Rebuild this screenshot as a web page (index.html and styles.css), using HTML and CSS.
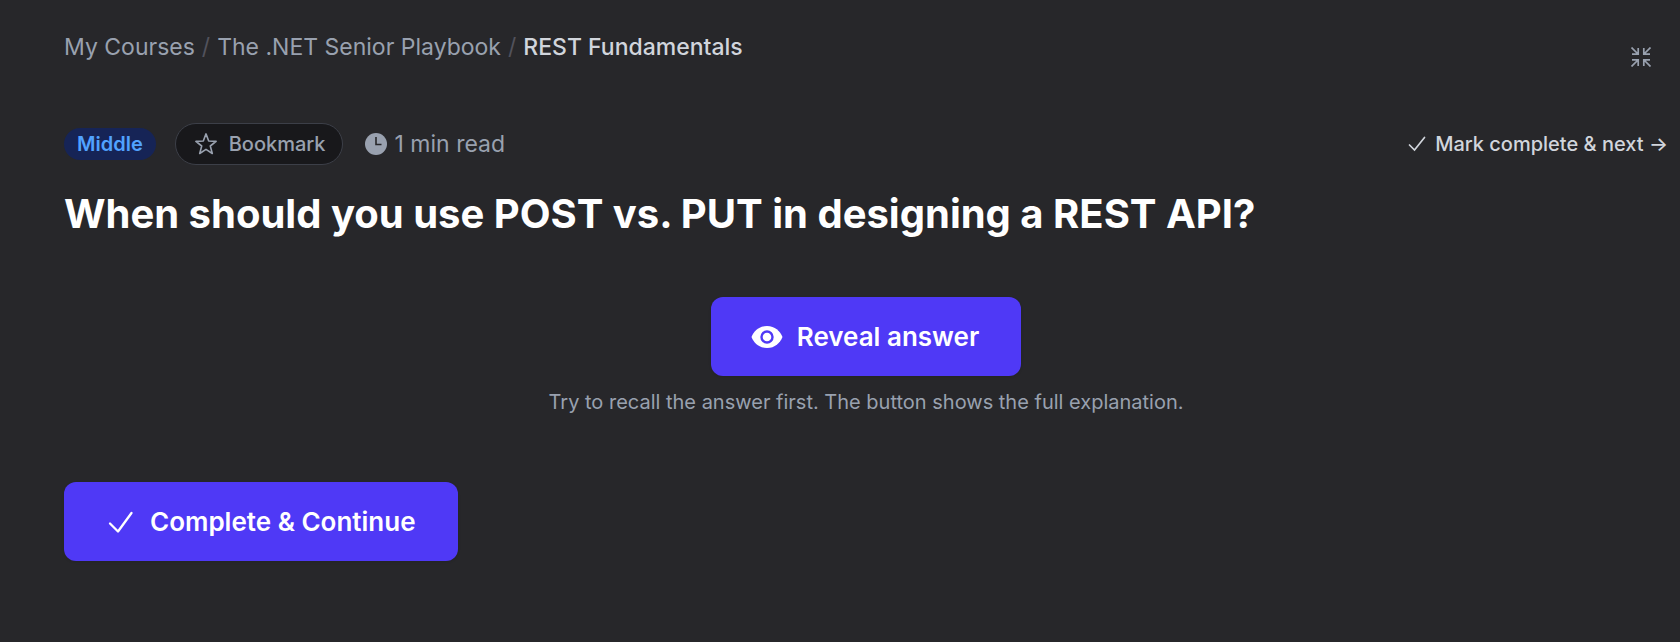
FILE: index.html
```html
<!DOCTYPE html>
<html lang="en">
<head>
<meta charset="utf-8">
<title>REST Fundamentals</title>
<link rel="stylesheet" href="styles.css">
</head>
<body>
<div class="page">
  <header class="topbar">
    <nav class="breadcrumb" aria-label="Breadcrumb">
      <a href="#">My Courses</a>
      <span class="separator">/</span>
      <a href="#">The .NET Senior Playbook</a>
      <span class="separator">/</span>
      <span class="current" aria-current="page">REST Fundamentals</span>
    </nav>
    <button class="collapse" type="button" aria-label="Exit focus mode">
      <svg width="20" height="20" viewBox="0 0 20 20" fill="none" stroke="currentColor" stroke-width="1.700"><path d="M.5.5 7 7M1 7.200H7.200V1M19.500.5 13 7M12.800 1v6.200H19M.5 19.500 7 13M1 12.800H7.200V19M19.500 19.500 13 13M12.800 19v-6.200H19"/></svg>
    </button>
  </header>
  <main>
    <div class="meta">
      <span class="level">Middle</span>
      <button class="bookmark" type="button">
        <svg width="22" height="22" viewBox="0 0 22 22" fill="none" stroke="currentColor" stroke-width="1.600" stroke-linejoin="round"><path d="M11 .9 13.700 8 21.100 8.400 15.300 13 17.300 20.500 11 16.400 4.700 20.500 6.700 13 .9 8.400 8.300 8Z"/></svg>
        Bookmark
      </button>
      <span class="duration">
        <svg width="22" height="22" viewBox="0 0 22 22"><circle cx="11" cy="11" r="11" fill="currentColor"/><path d="M11 4v7.500h5.500" fill="none" stroke="#27272a" stroke-width="1.600"/></svg>
        1 min read
      </span>
      <button class="next" type="button">
        <svg width="18" height="16" viewBox="0 0 18 16" fill="none" stroke="currentColor" stroke-width="1.700" stroke-linecap="round"><path d="m1.500 9 5 5L16.500 1.500"/></svg>
        Mark complete &amp; next →
      </button>
    </div>
    <h1 class="question">When should you use POST vs. PUT in designing a REST API?</h1>
    <section class="reveal">
      <button class="primary" type="button">
        <svg width="32" height="24" viewBox="0 0 32 24"><path d="M16 1C8 1 3 6 .5 12 3 18 8 23 16 23s13-5 15.500-11C29 6 24 1 16 1Z" fill="currentColor"/><circle cx="16" cy="12" r="5.500" fill="none" stroke="#4f39f6" stroke-width="2.400"/></svg>
        Reveal answer
      </button>
      <p class="hint">Try to recall the answer first. The button shows the full explanation.</p>
    </section>
    <button class="primary" type="button">
      <svg width="32" height="24" viewBox="0 0 32 24" fill="none" stroke="currentColor" stroke-width="2.300" stroke-linecap="round" stroke-linejoin="round"><path d="m6 13.500 8 8L27.500 3"/></svg>
      Complete &amp; Continue
    </button>
  </main>
</div>
</body>
</html>
```

FILE: styles.css
```css
* {
  box-sizing: border-box;
}

body {
  margin: 0;
  background: #27272a;
  color: #99a1af;
  font-family: Inter, "Liberation Sans", sans-serif;
  font-size: 23px;
  line-height: 32px;
}

button {
  display: inline-flex;
  align-items: center;
  padding: 0;
  border: 0;
  background: none;
  color: inherit;
  font: inherit;
  white-space: nowrap;
  cursor: pointer;
}

svg {
  flex: none;
}

.page {
  padding: 31px 12px 80px 64px;
}

.topbar {
  display: flex;
  align-items: flex-start;
  justify-content: space-between;
  margin-bottom: 40px;
}

.breadcrumb {
  display: flex;
  flex-wrap: wrap;
  gap: 7px;
}

.breadcrumb a {
  color: inherit;
  text-decoration: none;
}

.separator {
  color: #52525c;
}

.current {
  color: #d1d5dc;
  font-weight: 500;
}

.collapse {
  padding: 16px 17px;
}

.meta {
  display: flex;
  align-items: center;
  margin-bottom: 21px;
}

.level {
  padding: 0 13px;
  border-radius: 16px;
  background: #162456;
  color: #51a2ff;
  font-size: 20px;
  font-weight: 600;
}

.bookmark {
  gap: 12px;
  margin-left: 19px;
  padding: 4px 16px 4px 19px;
  border: 1px solid #3c3f48;
  border-radius: 21px;
  background: #18181b;
  font-size: 20px;
  font-weight: 500;
}

.duration {
  display: flex;
  align-items: center;
  gap: 8px;
  margin-left: 22px;
}

.next {
  gap: 9px;
  margin-left: auto;
  color: #d1d5dc;
  font-size: 20px;
  font-weight: 500;
}

.question {
  margin: 0 0 55px;
  color: #fff;
  font-size: 40px;
  font-weight: 700;
  line-height: 56px;
}

.reveal {
  display: flex;
  flex-direction: column;
  align-items: center;
  gap: 12px;
  margin-bottom: 66px;
}

.primary {
  gap: 14px;
  padding: 20px 42px 20px 40px;
  border-radius: 12px;
  background: #4f39f6;
  box-shadow: 0 1px 3px rgba(0, 0, 0, 0.1);
  color: #fff;
  font-size: 26px;
  font-weight: 600;
  line-height: 39px;
}

.hint {
  margin: 0;
  font-size: 20px;
  line-height: 28px;
}
```
